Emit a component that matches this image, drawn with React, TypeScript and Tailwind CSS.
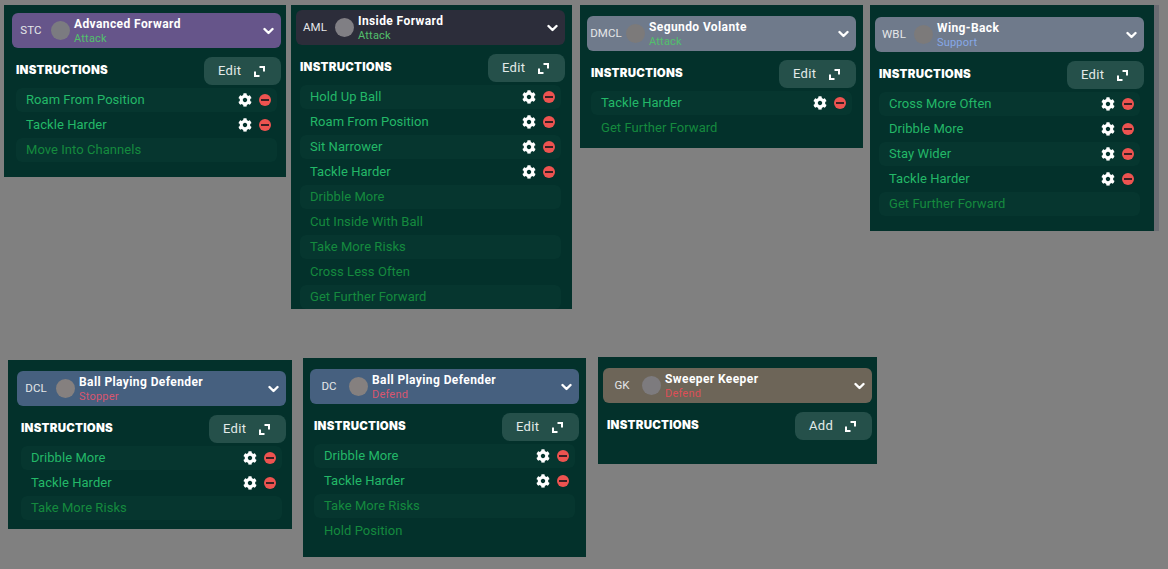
import React from 'react';
import { FaCog } from 'react-icons/fa';

type Instruction = { label: string; active?: boolean };

type PanelProps = {
  className: string;
  code: string;
  role: string;
  duty: string;
  headerBg: string;
  dutyColor: string;
  avatarColor: string;
  action?: string;
  rows: Instruction[];
};

const ExpandIcon = () => (
  <svg width="11" height="11" viewBox="0 0 11 11" fill="none" stroke="white" strokeWidth="2">
    <path d="M5.5 1H10V5.5" />
    <path d="M1 5.5V10H5.5" />
  </svg>
);

const Chevron = () => (
  <svg width="11" height="8" viewBox="0 0 11 8" fill="none" stroke="white" strokeWidth="2.4" strokeLinecap="round" strokeLinejoin="round">
    <path d="M1.5 2L5.5 6L9.5 2" />
  </svg>
);

const RemoveIcon = () => (
  <span className="flex h-[12px] w-[12px] items-center justify-center rounded-full bg-[#ee5350]">
    <span className="h-[2px] w-[8px] bg-[#3b2024]" />
  </span>
);

const Row = ({ label, active, striped }: Instruction & { striped: boolean }) => (
  <div className={`flex h-[24px] shrink-0 items-center justify-between rounded-md pl-[10px] pr-[6px] ${striped ? 'bg-[#06362f]' : ''}`}>
    <span className={`text-[13px] tracking-[0.05px] ${active ? 'text-[#23b868]' : 'text-[#158a3e]'}`}>{label}</span>
    {active && (
      <span className="flex items-center gap-[7px]">
        <FaCog className="text-white" size={14} />
        <RemoveIcon />
      </span>
    )}
  </div>
);

const Panel = ({ className, code, role, duty, headerBg, dutyColor, avatarColor, action = 'Edit', rows }: PanelProps) => (
  <section className={`absolute overflow-hidden bg-[#03312b] ${className}`}>
    <div className={`flex h-[35px] items-center rounded-md text-white ${headerBg}`}>
      <span className="w-[38px] shrink-0 text-center text-[11.5px] tracking-[0.1px] text-[#e4e6e8]">{code}</span>
      <span className={`ml-[1px] h-[19px] w-[19px] shrink-0 rounded-full ${avatarColor}`} />
      <div className="ml-[4px] flex min-w-0 flex-1 flex-col pt-[1px]">
        <span className="text-[12px] font-bold leading-[15px] tracking-[0.4px]">{role}</span>
        <span className={`text-[11px] leading-[14px] tracking-[0.2px] ${dutyColor}`}>{duty}</span>
      </div>
      <span className="mr-[7px] flex w-[11px] justify-center">
        <Chevron />
      </span>
    </div>
    <div className="mt-[9px] flex items-center justify-between pl-[4px]">
      <h3 className="font-['Inter',sans-serif] text-[11.5px] font-black tracking-[0.25px] text-white">INSTRUCTIONS</h3>
      <button className="flex h-[28px] w-[77px] items-center rounded-lg bg-[#25504a] pl-[14px] text-[13px] tracking-[0.3px] text-[#e3ebe9]">
        <span className="w-[36px] text-left">{action}</span>
        <ExpandIcon />
      </button>
    </div>
    {rows.length > 0 && (
      <div className="mx-[4px] mt-[3px] flex flex-col gap-[1px]">
        {rows.map((row, i) => (
          <Row key={row.label} {...row} striped={i % 2 === 0} />
        ))}
      </div>
    )}
  </section>
);

const on = (label: string): Instruction => ({ label, active: true });
const off = (label: string): Instruction => ({ label });

export default function App() {
  return (
    <main className="relative h-[569px] w-[1168px] overflow-hidden bg-[#808080] font-['Roboto',sans-serif]">
      <Panel
        className="left-[4px] top-[5px] h-[172px] w-[282px] pl-[8px] pr-[5px] pt-[8px]"
        code="STC"
        role="Advanced Forward"
        duty="Attack"
        headerBg="bg-[#66558a]"
        dutyColor="text-[#52c06c]"
        avatarColor="bg-[#7b7b80]"
        rows={[on('Roam From Position'), on('Tackle Harder'), off('Move Into Channels')]}
      />
      <Panel
        className="left-[291px] top-[5px] h-[304px] w-[281px] pl-[5px] pr-[7px] pt-[5px]"
        code="AML"
        role="Inside Forward"
        duty="Attack"
        headerBg="bg-[#2c2d3a]"
        dutyColor="text-[#52c06c]"
        avatarColor="bg-[#807f84]"
        rows={[
          on('Hold Up Ball'),
          on('Roam From Position'),
          on('Sit Narrower'),
          on('Tackle Harder'),
          off('Dribble More'),
          off('Cut Inside With Ball'),
          off('Take More Risks'),
          off('Cross Less Often'),
          off('Get Further Forward'),
        ]}
      />
      <Panel
        className="left-[580px] top-[5px] h-[143px] w-[283px] pl-[7px] pr-[7px] pt-[11px]"
        code="DMCL"
        role="Segundo Volante"
        duty="Attack"
        headerBg="bg-[#6f7a8b]"
        dutyColor="text-[#52c06c]"
        avatarColor="bg-[#7c7a7a]"
        rows={[on('Tackle Harder'), off('Get Further Forward')]}
      />
      <div className="absolute left-[1154px] top-[5px] h-[226px] w-[5px] bg-[#6a6c72]" />
      <Panel
        className="left-[870px] top-[5px] h-[226px] w-[284px] pl-[5px] pr-[10px] pt-[12px]"
        code="WBL"
        role="Wing-Back"
        duty="Support"
        headerBg="bg-[#6f7a8b]"
        dutyColor="text-[#86a8e8]"
        avatarColor="bg-[#7c7a7a]"
        rows={[on('Cross More Often'), on('Dribble More'), on('Stay Wider'), on('Tackle Harder'), off('Get Further Forward')]}
      />
      <Panel
        className="left-[8px] top-[360px] h-[169px] w-[284px] pl-[9px] pr-[6px] pt-[11px]"
        code="DCL"
        role="Ball Playing Defender"
        duty="Stopper"
        headerBg="bg-[#46607f]"
        dutyColor="text-[#d8566f]"
        avatarColor="bg-[#85807f]"
        rows={[on('Dribble More'), on('Tackle Harder'), off('Take More Risks')]}
      />
      <Panel
        className="left-[303px] top-[358px] h-[199px] w-[283px] pl-[7px] pr-[7px] pt-[11px]"
        code="DC"
        role="Ball Playing Defender"
        duty="Defend"
        headerBg="bg-[#46607f]"
        dutyColor="text-[#d8566f]"
        avatarColor="bg-[#85807f]"
        rows={[on('Dribble More'), on('Tackle Harder'), off('Take More Risks'), off('Hold Position')]}
      />
      <Panel
        className="left-[598px] top-[357px] h-[107px] w-[279px] pl-[5px] pr-[5px] pt-[11px]"
        code="GK"
        role="Sweeper Keeper"
        duty="Defend"
        headerBg="bg-[#6d6558]"
        dutyColor="text-[#dc4f57]"
        avatarColor="bg-[#7d7b7e]"
        action="Add"
        rows={[]}
      />
    </main>
  );
}
